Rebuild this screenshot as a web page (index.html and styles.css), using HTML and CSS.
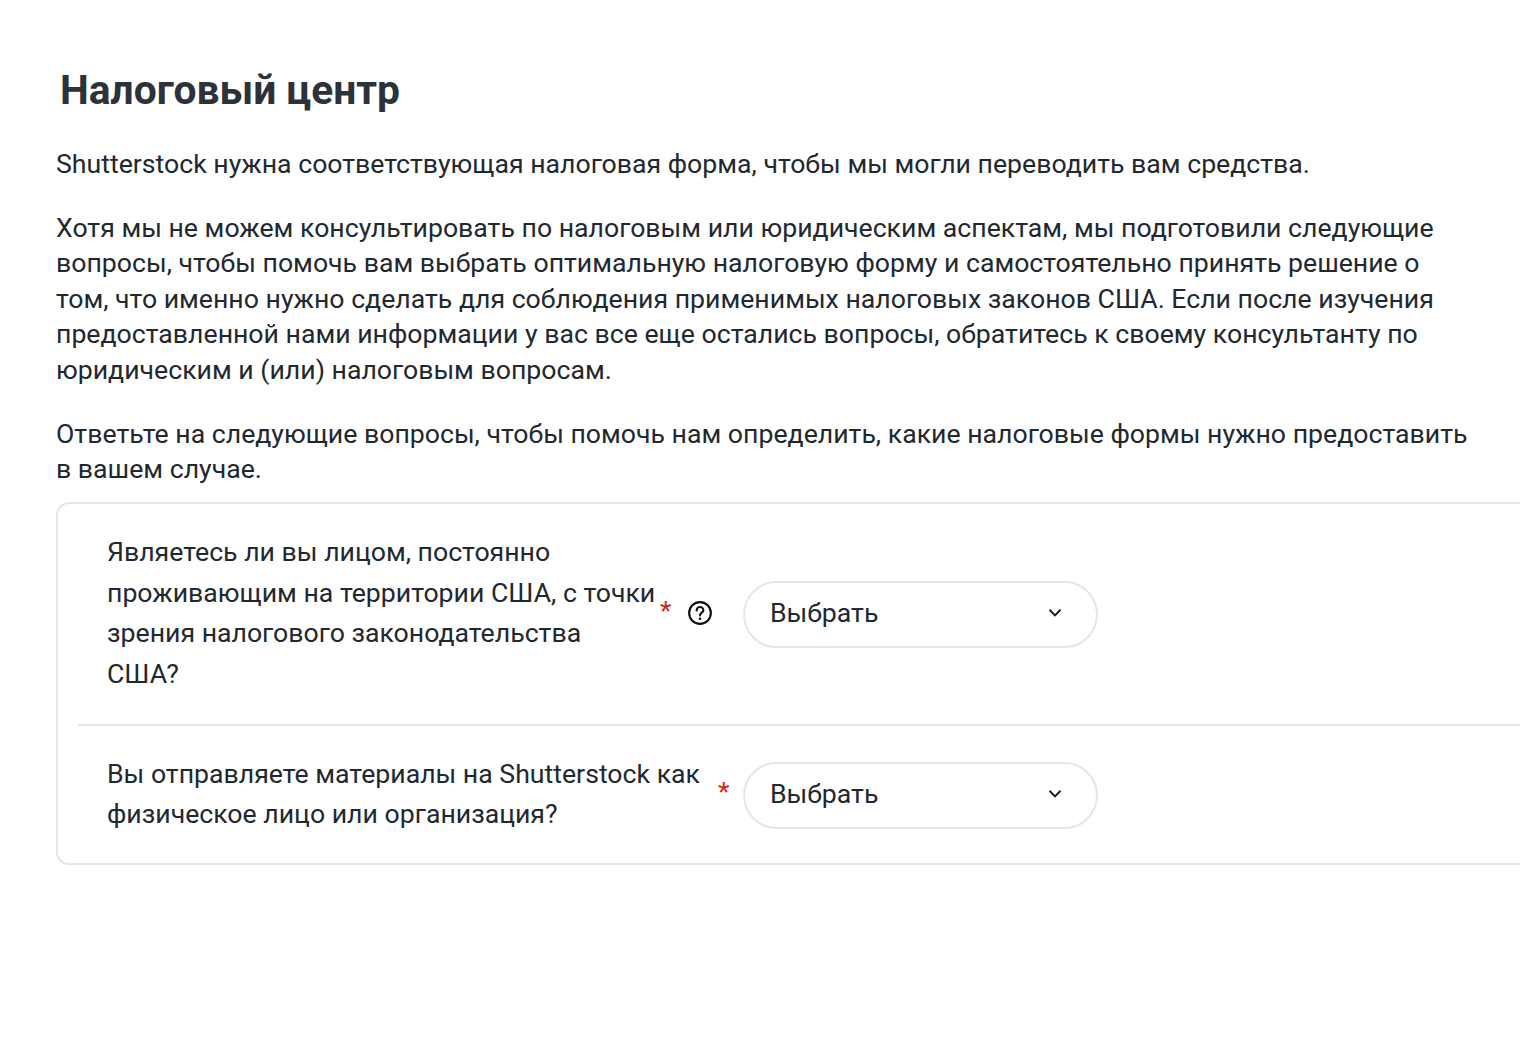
FILE: index.html
```html
<!DOCTYPE html>
<html lang="ru">
<head>
<meta charset="utf-8">
<title>Налоговый центр</title>
<link rel="stylesheet" href="styles.css">
</head>
<body>
<main class="page">
  <h1 class="title">Налоговый центр</h1>
  <p class="para">Shutterstock нужна соответствующая налоговая форма, чтобы мы могли переводить вам средства.</p>
  <p class="para">Хотя мы не можем консультировать по налоговым или юридическим аспектам, мы подготовили следующие вопросы, чтобы помочь вам выбрать оптимальную налоговую форму и самостоятельно принять решение о том, что именно нужно сделать для соблюдения применимых налоговых законов США. Если после изучения предоставленной нами информации у вас все еще остались вопросы, обратитесь к своему консультанту по юридическим и (или) налоговым вопросам.</p>
  <p class="para para-last">Ответьте на следующие вопросы, чтобы помочь нам определить, какие налоговые формы нужно предоставить в вашем случае.</p>
  <section class="card">
    <div class="row row-first">
      <div class="label">
        <span class="label-text">Являетесь ли вы лицом, постоянно проживающим на территории США, с точки зрения налогового законодательства<br>США?</span>
        <span class="star">*</span>
        <svg class="help" viewBox="0 0 24 24" width="26" height="26" fill="none" stroke="#111" stroke-width="2" aria-hidden="true">
          <circle cx="12" cy="12" r="10"/>
          <path d="M8.9 9.6a3.1 3.1 0 0 1 6.2-.1c0 2.1-3.1 2.4-3.1 4.7" stroke-linecap="round"/>
          <circle cx="12" cy="17.3" r="1.2" fill="#111" stroke="none"/>
        </svg>
      </div>
      <div class="select"><span>Выбрать</span>
        <svg class="chev" viewBox="0 0 14 10" width="14" height="10" fill="none" stroke="#1a1f26" stroke-width="2" aria-hidden="true"><path d="M1.5 1.8 7 7.4l5.5-5.6"/></svg>
      </div>
    </div>
    <div class="row row-second">
      <div class="label">
        <span class="label-text">Вы отправляете материалы на Shutterstock как физическое лицо или организация?</span>
        <span class="star">*</span>
      </div>
      <div class="select"><span>Выбрать</span>
        <svg class="chev" viewBox="0 0 14 10" width="14" height="10" fill="none" stroke="#1a1f26" stroke-width="2" aria-hidden="true"><path d="M1.5 1.8 7 7.4l5.5-5.6"/></svg>
      </div>
    </div>
  </section>
</main>
</body>
</html>
```
FILE: styles.css
```css
html, body {
  margin: 0;
  background: #fff;
}
body {
  overflow: hidden;
  height: 1050px;
  font-family: Roboto, "Liberation Sans", sans-serif;
  color: #212830;
}
.page {
  padding: 64px 0 0 56px;
}
.title {
  margin: 0 0 30.6px 4px;
  font-size: 40.75px;
  line-height: 52px;
  font-weight: 700;
  color: #2c3239;
}
.para {
  margin: 0 0 28.5px;
  width: 1420px;
  font-size: 26.67px;
  line-height: 35.5px;
}
.para-last {
  margin-bottom: 14px;
}
.card {
  box-sizing: border-box;
  width: 1600px;
  height: 363px;
  padding: 0 0 0 20px;
  border: 2px solid #e6e6e6;
  border-radius: 13px;
}
.row {
  display: flex;
  align-items: center;
}
.row-first {
  height: 220px;
  border-bottom: 2px solid #e6e6e6;
}
.row-second {
  height: 138px;
}
.label {
  display: flex;
  align-items: center;
  box-sizing: border-box;
  width: 665px;
  padding: 0 0 1px 29px;
  font-size: 26.67px;
  line-height: 40.5px;
}
.label-text {
  min-width: 0;
}
.row-first .label-text {
  width: 553px;
}
.row-second .label-text {
  width: 611px;
}
.star {
  margin-top: -4px;
  color: #d9230f;
}
.help {
  margin-left: 16px;
}
.select {
  box-sizing: border-box;
  display: flex;
  align-items: center;
  justify-content: space-between;
  width: 355px;
  height: 67px;
  margin-top: 1px;
  padding: 0 34px 2px 25px;
  border: 2px solid #e6e6e6;
  border-radius: 34px;
  font-size: 26.67px;
}
```
